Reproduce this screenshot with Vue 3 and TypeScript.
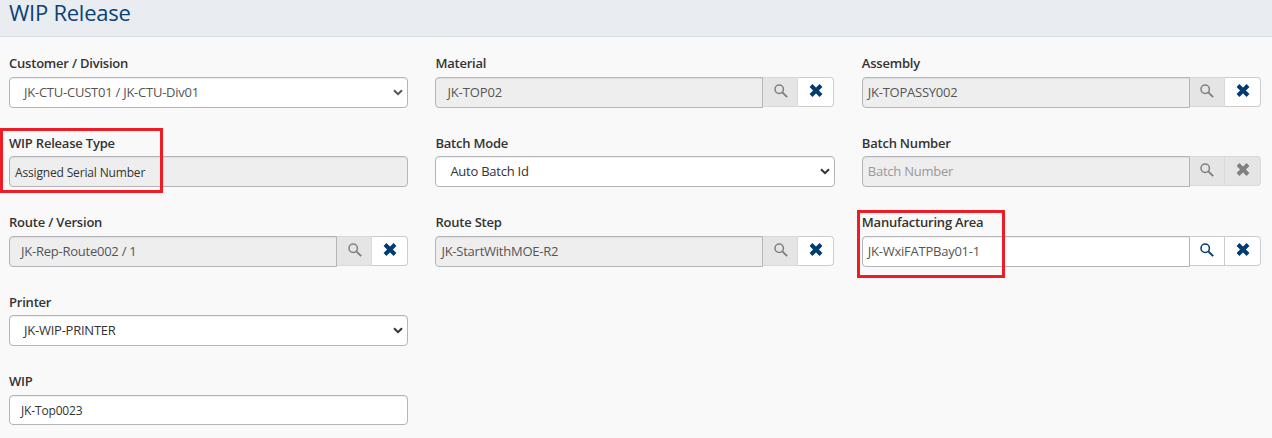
<script setup lang="ts">
type Kind = 'select' | 'text' | 'lookup'

interface Field {
  id: string
  label: string
  value: string
  kind: Kind
  disabled?: boolean
  muted?: boolean
  placeholder?: boolean
  clearDisabled?: boolean
  highlight?: boolean
}

const rows: Field[][] = [
  [
    { id: 'customer', label: 'Customer / Division', value: 'JK-CTU-CUST01 / JK-CTU-Div01', kind: 'select', muted: true },
    { id: 'material', label: 'Material', value: 'JK-TOP02', kind: 'lookup', disabled: true, muted: true },
    { id: 'assembly', label: 'Assembly', value: 'JK-TOPASSY002', kind: 'lookup', disabled: true, muted: true },
  ],
  [
    { id: 'release-type', label: 'WIP Release Type', value: 'Assigned Serial Number', kind: 'text', disabled: true, highlight: true },
    { id: 'batch-mode', label: 'Batch Mode', value: 'Auto Batch Id', kind: 'select' },
    { id: 'batch-number', label: 'Batch Number', value: 'Batch Number', kind: 'lookup', disabled: true, placeholder: true, clearDisabled: true },
  ],
  [
    { id: 'route', label: 'Route / Version', value: 'JK-Rep-Route002 / 1', kind: 'lookup', disabled: true, muted: true },
    { id: 'route-step', label: 'Route Step', value: 'JK-StartWithMOE-R2', kind: 'lookup', disabled: true, muted: true },
    { id: 'area', label: 'Manufacturing Area', value: 'JK-WxiFATPBay01-1', kind: 'lookup', muted: true, highlight: true },
  ],
  [{ id: 'printer', label: 'Printer', value: 'JK-WIP-PRINTER', kind: 'select' }],
  [{ id: 'wip', label: 'WIP', value: 'JK-Top0023', kind: 'text' }],
]
</script>

<template>
  <main class="page">
    <header class="header">
      <h1>WIP Release</h1>
    </header>
    <section class="form">
      <div v-for="(row, i) in rows" :key="i" class="row">
        <div v-for="f in row" :key="f.id" class="field" :class="f.id">
          <div class="label"><span>{{ f.label }}</span></div>
          <div class="group">
            <div
              class="control"
              :class="[f.kind, { disabled: f.disabled, muted: f.muted, placeholder: f.placeholder }]"
            >
              <span class="value">{{ f.value }}</span>
              <svg v-if="f.kind === 'select'" class="chevron" viewBox="0 0 10 7" width="10" height="7">
                <path d="M1 1.2 5 5.2 9 1.2" fill="none" stroke="currentColor" stroke-width="2" />
              </svg>
            </div>
            <template v-if="f.kind === 'lookup'">
              <button class="btn search" :class="{ off: f.disabled }" type="button" aria-label="Search">
                <svg viewBox="0 0 14 14" width="14" height="14">
                  <circle cx="5.2" cy="5.2" r="4.2" fill="none" stroke="currentColor" stroke-width="1.5" />
                  <path d="M8.3 8.3 13.2 13.2" fill="none" stroke="currentColor" stroke-width="1.9" />
                </svg>
              </button>
              <button class="btn clear" :class="{ off: f.clearDisabled }" type="button" aria-label="Clear">
                <svg viewBox="0 0 14 13" width="14" height="13">
                  <path d="M2 1.5 12 11.5M12 1.5 2 11.5" fill="none" stroke="currentColor" stroke-width="4" />
                </svg>
              </button>
            </template>
          </div>
          <div v-if="f.highlight" class="highlight"></div>
        </div>
      </div>
    </section>
  </main>
</template>

<style>
body {
  margin: 0;
  background: #f9f9f9;
}
</style>

<style scoped>
.page {
  width: 1272px;
  height: 438px;
  overflow: hidden;
  background: #f9f9f9;
  font-family: 'Open Sans', 'Noto Sans', sans-serif;
}
.header {
  box-sizing: border-box;
  height: 37px;
  padding-left: 9px;
  background: #e9ecf1;
  border-bottom: 1px solid #dadfe6;
}
h1 {
  margin: 0;
  font-size: 22px;
  font-weight: 400;
  line-height: 25px;
  letter-spacing: -0.25px;
  color: #0b4274;
}
.form {
  padding: 17.45px 11px 0 9px;
}
.row {
  display: grid;
  grid-template-columns: repeat(3, 399px);
  column-gap: 27.4px;
  height: 79.5px;
}
.row:last-child {
  height: 60px;
}
.field {
  position: relative;
}
.label {
  height: 22.35px;
  font-size: 13px;
  font-weight: 600;
  line-height: 18px;
  letter-spacing: -0.21px;
  color: #333;
  white-space: nowrap;
}
.group {
  display: flex;
  align-items: flex-start;
}
.control {
  box-sizing: border-box;
  display: flex;
  flex: 1;
  align-items: center;
  height: 31px;
  padding: 0 5px;
  border: 1px solid #b3b5b8;
  border-radius: 4px;
  background: #fff;
  box-shadow: inset 0 1px 1px rgba(0, 0, 0, 0.07);
  font-size: 13px;
  letter-spacing: -0.24px;
  color: #333;
  white-space: nowrap;
}
.value {
  margin-top: -0.7px;
}
.select {
  justify-content: space-between;
  padding: 0 4px 0 14px;
}
.lookup {
  border-radius: 4px 0 0 4px;
}
.disabled {
  background: #eee;
}
.muted {
  color: #555;
}
.placeholder {
  color: #999;
}
.material .control,
.route .control,
.wip .control {
  padding-left: 11px;
}
.material .control {
  letter-spacing: -0.12px;
}
.release-type .control,
.wip .control {
  font-size: 12px;
  letter-spacing: -0.16px;
}
.release-type .value,
.wip .value {
  margin-top: 1px;
}
.wip .control {
  height: 30px;
}
.batch-mode .control {
  margin-right: -1px;
}
.btn {
  box-sizing: border-box;
  display: flex;
  flex: none;
  align-items: flex-start;
  justify-content: center;
  width: 36px;
  height: 30px;
  margin: 0;
  padding: 6px 0 0 1px;
  border: 1px solid #ccc;
  border-left: 0;
  background: #fff;
  color: #003b71;
}
.search {
  width: 35px;
}
.clear {
  border-radius: 0 4px 4px 0;
}
.off {
  background: #e5e5e5;
  border-color: #d9d9d9;
  color: #808080;
}
.highlight {
  position: absolute;
  box-sizing: border-box;
  border: 3px solid #ee1c25;
}
.release-type .highlight {
  left: -9px;
  top: -5.7px;
  width: 163px;
  height: 65px;
}
.area .highlight {
  left: -5px;
  top: -3.7px;
  width: 148px;
  height: 68px;
}
</style>
